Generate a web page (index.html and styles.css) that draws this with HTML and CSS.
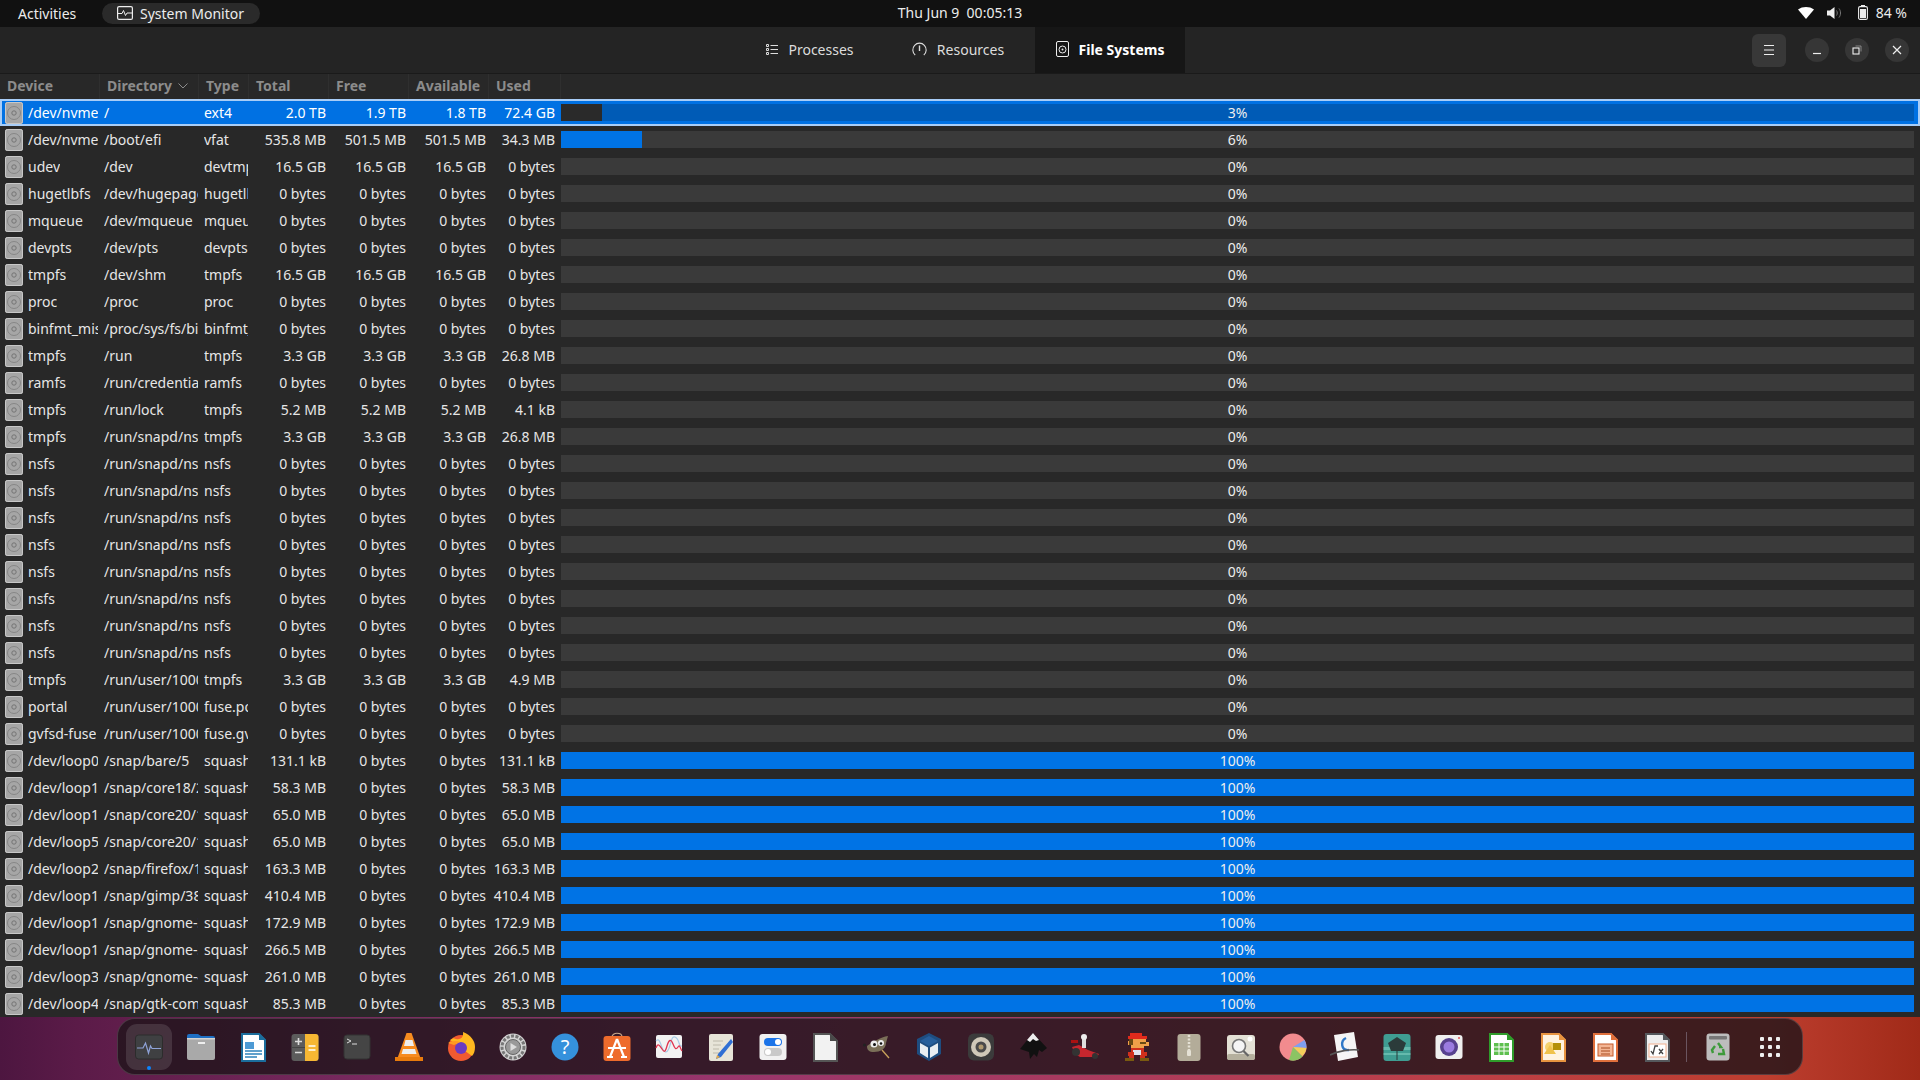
FILE: index.html
```html
<!DOCTYPE html>
<html lang="en">
  <head>
    <meta charset="UTF-8" />
    <title>System Monitor</title>
    <link rel="stylesheet" href="styles.css">
  </head>
  <body>
    <svg class="defs" width="0" height="0">
      <symbol id="disk" viewBox="0 0 18 22">
        <rect x="0" y="0" width="18" height="22" rx="2.5" fill="#a6a6a6"/>
        <rect x="0.5" y="0.5" width="17" height="21" rx="2" fill="none" stroke="#c8c8c8"/>
        <circle cx="9" cy="11" r="6.5" fill="none" stroke="#868686"/>
        <circle cx="9" cy="11" r="2.2" fill="none" stroke="#747474"/>
      </symbol>
    </svg>

    <!-- gnome top bar -->
    <header class="topbar">
      <div class="top-left">
        <span class="activities">Activities</span>
        <span class="app-pill">
          <svg width="16" height="14" viewBox="0 0 16 14"><rect x="0.6" y="0.6" width="14.8" height="12.8" rx="1.5" fill="none" stroke="#eee" stroke-width="1.2"/><path d="M1 7.5h4l1.5-3 2 5 1.5-2.5H15" fill="none" stroke="#eee"/></svg>
          System Monitor
        </span>
      </div>
      <span class="clock">Thu Jun 9&nbsp; 00:05:13</span>
      <span class="tray">
        <svg width="16" height="12" viewBox="0 0 16 12"><path d="M0 2.5C4.5-.8 11.5-.8 16 2.5L8 12z" fill="#fff"/></svg>
        <svg class="tray-vol" width="15" height="14" viewBox="0 0 15 14"><path d="M0 4.5h3L7.5 1v12L3 9.5H0z" fill="#eee"/><path d="M9.5 4.5c1 1.500 1 3.500 0 5M12 2.5c2 2.500 2 6.500 0 9" fill="none" stroke="#777"/></svg>
        <svg class="tray-bat" width="10" height="15" viewBox="0 0 10 15"><rect x="0.6" y="1.6" width="8.8" height="12.8" rx="1.5" fill="none" stroke="#eee" stroke-width="1.1"/><rect x="3" y="0" width="4" height="2" fill="#eee"/><rect x="2" y="4" width="6" height="9" fill="#eee"/></svg>
        <span>84 %</span>
      </span>
    </header>

    <div class="window">
      <div class="headerbar">
        <nav class="tabs">
          <div class="tab">
            <svg width="12" height="11" viewBox="0 0 12 11"><path d="M4.5 1.5H12M4.5 5.5H12M4.5 9.5H12" stroke="#ddd" fill="none"/><path d="M.5.5h2v2h-2zM.5 4.5h2v2h-2zM.5 8.5h2v2h-2z" stroke="#ddd" fill="none"/></svg>
            Processes
          </div>
          <div class="tab tab-res">
            <svg width="15" height="14" viewBox="0 0 15 14"><path d="M3.2 13A6.7 6.7 0 1 1 11.8 13" fill="none" stroke="#ddd" stroke-width="1.1"/><path d="M7.5 3.5v5.500" stroke="#ddd" stroke-width="1.4"/></svg>
            Resources
          </div>
          <div class="tab tab-active">
            <svg width="13" height="16" viewBox="0 0 13 16"><rect x="0.5" y="0.5" width="12" height="15" rx="1.5" fill="none" stroke="#eee"/><circle cx="6.5" cy="8.5" r="3.5" fill="none" stroke="#eee"/><circle cx="6.5" cy="8.5" r="1" fill="#eee"/></svg>
            File Systems
          </div>
        </nav>
        <div class="wm-buttons">
          <button class="menu-btn"><svg width="12" height="10" viewBox="0 0 12 10"><path d="M1 .5h10M1 5h10M1 9.5h10" stroke="#eee"/></svg></button>
          <button class="wm-btn"><svg width="10" height="10" viewBox="0 0 10 10"><path d="M1 8.5h8" stroke="#eee" stroke-width="1.2"/></svg></button>
          <button class="wm-btn"><svg width="10" height="10" viewBox="0 0 10 10"><rect x="1" y="3" width="6" height="6" fill="none" stroke="#eee" stroke-width="1.1"/><path d="M3.5 1H9v5.5" fill="none" stroke="#999" stroke-width=".8"/></svg></button>
          <button class="wm-btn"><svg width="10" height="10" viewBox="0 0 10 10"><path d="M1 1l8 8M9 1l-8 8" stroke="#eee" stroke-width="1.2"/></svg></button>
        </div>
      </div>

      <div class="row-grid col-head">
        <span>Device</span>
        <span>Directory <svg width="10" height="6" viewBox="0 0 10 6"><path d="M.5.5L5 5l4.5-4.5" fill="none" stroke="#8c8c8c"/></svg></span>
        <span>Type</span>
        <span>Total</span>
        <span>Free</span>
        <span>Available</span>
        <span>Used</span>
        <span></span>
      </div>

      <div class="rows">
        <div class="row-grid row selected"><span class="device"><svg class="disk"><use href="#disk"/></svg><span>/dev/nvme0n1p2</span></span><span class="dir">/</span><span class="type">ext4</span><span class="num">2.0 TB</span><span class="num">1.9 TB</span><span class="num">1.8 TB</span><span class="num used">72.4 GB</span><span class="bar"><i style="width:3%"></i><b>3%</b></span></div>
        <div class="row-grid row"><span class="device"><svg class="disk"><use href="#disk"/></svg><span>/dev/nvme0n1p1</span></span><span class="dir">/boot/efi</span><span class="type">vfat</span><span class="num">535.8 MB</span><span class="num">501.5 MB</span><span class="num">501.5 MB</span><span class="num used">34.3 MB</span><span class="bar"><i style="width:6%"></i><b>6%</b></span></div>
        <div class="row-grid row"><span class="device"><svg class="disk"><use href="#disk"/></svg><span>udev</span></span><span class="dir">/dev</span><span class="type">devtmpfs</span><span class="num">16.5 GB</span><span class="num">16.5 GB</span><span class="num">16.5 GB</span><span class="num used">0 bytes</span><span class="bar"><b>0%</b></span></div>
        <div class="row-grid row"><span class="device"><svg class="disk"><use href="#disk"/></svg><span>hugetlbfs</span></span><span class="dir">/dev/hugepages</span><span class="type">hugetlbfs</span><span class="num">0 bytes</span><span class="num">0 bytes</span><span class="num">0 bytes</span><span class="num used">0 bytes</span><span class="bar"><b>0%</b></span></div>
        <div class="row-grid row"><span class="device"><svg class="disk"><use href="#disk"/></svg><span>mqueue</span></span><span class="dir">/dev/mqueue</span><span class="type">mqueue</span><span class="num">0 bytes</span><span class="num">0 bytes</span><span class="num">0 bytes</span><span class="num used">0 bytes</span><span class="bar"><b>0%</b></span></div>
        <div class="row-grid row"><span class="device"><svg class="disk"><use href="#disk"/></svg><span>devpts</span></span><span class="dir">/dev/pts</span><span class="type">devpts</span><span class="num">0 bytes</span><span class="num">0 bytes</span><span class="num">0 bytes</span><span class="num used">0 bytes</span><span class="bar"><b>0%</b></span></div>
        <div class="row-grid row"><span class="device"><svg class="disk"><use href="#disk"/></svg><span>tmpfs</span></span><span class="dir">/dev/shm</span><span class="type">tmpfs</span><span class="num">16.5 GB</span><span class="num">16.5 GB</span><span class="num">16.5 GB</span><span class="num used">0 bytes</span><span class="bar"><b>0%</b></span></div>
        <div class="row-grid row"><span class="device"><svg class="disk"><use href="#disk"/></svg><span>proc</span></span><span class="dir">/proc</span><span class="type">proc</span><span class="num">0 bytes</span><span class="num">0 bytes</span><span class="num">0 bytes</span><span class="num used">0 bytes</span><span class="bar"><b>0%</b></span></div>
        <div class="row-grid row"><span class="device"><svg class="disk"><use href="#disk"/></svg><span>binfmt_misc</span></span><span class="dir">/proc/sys/fs/binfmt_misc</span><span class="type">binfmt_misc</span><span class="num">0 bytes</span><span class="num">0 bytes</span><span class="num">0 bytes</span><span class="num used">0 bytes</span><span class="bar"><b>0%</b></span></div>
        <div class="row-grid row"><span class="device"><svg class="disk"><use href="#disk"/></svg><span>tmpfs</span></span><span class="dir">/run</span><span class="type">tmpfs</span><span class="num">3.3 GB</span><span class="num">3.3 GB</span><span class="num">3.3 GB</span><span class="num used">26.8 MB</span><span class="bar"><b>0%</b></span></div>
        <div class="row-grid row"><span class="device"><svg class="disk"><use href="#disk"/></svg><span>ramfs</span></span><span class="dir">/run/credentials</span><span class="type">ramfs</span><span class="num">0 bytes</span><span class="num">0 bytes</span><span class="num">0 bytes</span><span class="num used">0 bytes</span><span class="bar"><b>0%</b></span></div>
        <div class="row-grid row"><span class="device"><svg class="disk"><use href="#disk"/></svg><span>tmpfs</span></span><span class="dir">/run/lock</span><span class="type">tmpfs</span><span class="num">5.2 MB</span><span class="num">5.2 MB</span><span class="num">5.2 MB</span><span class="num used">4.1 kB</span><span class="bar"><b>0%</b></span></div>
        <div class="row-grid row"><span class="device"><svg class="disk"><use href="#disk"/></svg><span>tmpfs</span></span><span class="dir">/run/snapd/ns</span><span class="type">tmpfs</span><span class="num">3.3 GB</span><span class="num">3.3 GB</span><span class="num">3.3 GB</span><span class="num used">26.8 MB</span><span class="bar"><b>0%</b></span></div>
        <div class="row-grid row"><span class="device"><svg class="disk"><use href="#disk"/></svg><span>nsfs</span></span><span class="dir">/run/snapd/ns/a</span><span class="type">nsfs</span><span class="num">0 bytes</span><span class="num">0 bytes</span><span class="num">0 bytes</span><span class="num used">0 bytes</span><span class="bar"><b>0%</b></span></div>
        <div class="row-grid row"><span class="device"><svg class="disk"><use href="#disk"/></svg><span>nsfs</span></span><span class="dir">/run/snapd/ns/b</span><span class="type">nsfs</span><span class="num">0 bytes</span><span class="num">0 bytes</span><span class="num">0 bytes</span><span class="num used">0 bytes</span><span class="bar"><b>0%</b></span></div>
        <div class="row-grid row"><span class="device"><svg class="disk"><use href="#disk"/></svg><span>nsfs</span></span><span class="dir">/run/snapd/ns/c</span><span class="type">nsfs</span><span class="num">0 bytes</span><span class="num">0 bytes</span><span class="num">0 bytes</span><span class="num used">0 bytes</span><span class="bar"><b>0%</b></span></div>
        <div class="row-grid row"><span class="device"><svg class="disk"><use href="#disk"/></svg><span>nsfs</span></span><span class="dir">/run/snapd/ns/d</span><span class="type">nsfs</span><span class="num">0 bytes</span><span class="num">0 bytes</span><span class="num">0 bytes</span><span class="num used">0 bytes</span><span class="bar"><b>0%</b></span></div>
        <div class="row-grid row"><span class="device"><svg class="disk"><use href="#disk"/></svg><span>nsfs</span></span><span class="dir">/run/snapd/ns/e</span><span class="type">nsfs</span><span class="num">0 bytes</span><span class="num">0 bytes</span><span class="num">0 bytes</span><span class="num used">0 bytes</span><span class="bar"><b>0%</b></span></div>
        <div class="row-grid row"><span class="device"><svg class="disk"><use href="#disk"/></svg><span>nsfs</span></span><span class="dir">/run/snapd/ns/f</span><span class="type">nsfs</span><span class="num">0 bytes</span><span class="num">0 bytes</span><span class="num">0 bytes</span><span class="num used">0 bytes</span><span class="bar"><b>0%</b></span></div>
        <div class="row-grid row"><span class="device"><svg class="disk"><use href="#disk"/></svg><span>nsfs</span></span><span class="dir">/run/snapd/ns/g</span><span class="type">nsfs</span><span class="num">0 bytes</span><span class="num">0 bytes</span><span class="num">0 bytes</span><span class="num used">0 bytes</span><span class="bar"><b>0%</b></span></div>
        <div class="row-grid row"><span class="device"><svg class="disk"><use href="#disk"/></svg><span>nsfs</span></span><span class="dir">/run/snapd/ns/h</span><span class="type">nsfs</span><span class="num">0 bytes</span><span class="num">0 bytes</span><span class="num">0 bytes</span><span class="num used">0 bytes</span><span class="bar"><b>0%</b></span></div>
        <div class="row-grid row"><span class="device"><svg class="disk"><use href="#disk"/></svg><span>tmpfs</span></span><span class="dir">/run/user/1000</span><span class="type">tmpfs</span><span class="num">3.3 GB</span><span class="num">3.3 GB</span><span class="num">3.3 GB</span><span class="num used">4.9 MB</span><span class="bar"><b>0%</b></span></div>
        <div class="row-grid row"><span class="device"><svg class="disk"><use href="#disk"/></svg><span>portal</span></span><span class="dir">/run/user/1000/doc</span><span class="type">fuse.portal</span><span class="num">0 bytes</span><span class="num">0 bytes</span><span class="num">0 bytes</span><span class="num used">0 bytes</span><span class="bar"><b>0%</b></span></div>
        <div class="row-grid row"><span class="device"><svg class="disk"><use href="#disk"/></svg><span>gvfsd-fuse</span></span><span class="dir">/run/user/1000/gvfs</span><span class="type">fuse.gvfsd-fuse</span><span class="num">0 bytes</span><span class="num">0 bytes</span><span class="num">0 bytes</span><span class="num used">0 bytes</span><span class="bar"><b>0%</b></span></div>
        <div class="row-grid row"><span class="device"><svg class="disk"><use href="#disk"/></svg><span>/dev/loop0</span></span><span class="dir">/snap/bare/5</span><span class="type">squashfs</span><span class="num">131.1 kB</span><span class="num">0 bytes</span><span class="num">0 bytes</span><span class="num used">131.1 kB</span><span class="bar"><i style="width:100%"></i><b>100%</b></span></div>
        <div class="row-grid row"><span class="device"><svg class="disk"><use href="#disk"/></svg><span>/dev/loop11</span></span><span class="dir">/snap/core18/2409</span><span class="type">squashfs</span><span class="num">58.3 MB</span><span class="num">0 bytes</span><span class="num">0 bytes</span><span class="num used">58.3 MB</span><span class="bar"><i style="width:100%"></i><b>100%</b></span></div>
        <div class="row-grid row"><span class="device"><svg class="disk"><use href="#disk"/></svg><span>/dev/loop14</span></span><span class="dir">/snap/core20/1405</span><span class="type">squashfs</span><span class="num">65.0 MB</span><span class="num">0 bytes</span><span class="num">0 bytes</span><span class="num used">65.0 MB</span><span class="bar"><i style="width:100%"></i><b>100%</b></span></div>
        <div class="row-grid row"><span class="device"><svg class="disk"><use href="#disk"/></svg><span>/dev/loop5</span></span><span class="dir">/snap/core20/1518</span><span class="type">squashfs</span><span class="num">65.0 MB</span><span class="num">0 bytes</span><span class="num">0 bytes</span><span class="num used">65.0 MB</span><span class="bar"><i style="width:100%"></i><b>100%</b></span></div>
        <div class="row-grid row"><span class="device"><svg class="disk"><use href="#disk"/></svg><span>/dev/loop2</span></span><span class="dir">/snap/firefox/1443</span><span class="type">squashfs</span><span class="num">163.3 MB</span><span class="num">0 bytes</span><span class="num">0 bytes</span><span class="num used">163.3 MB</span><span class="bar"><i style="width:100%"></i><b>100%</b></span></div>
        <div class="row-grid row"><span class="device"><svg class="disk"><use href="#disk"/></svg><span>/dev/loop17</span></span><span class="dir">/snap/gimp/380</span><span class="type">squashfs</span><span class="num">410.4 MB</span><span class="num">0 bytes</span><span class="num">0 bytes</span><span class="num used">410.4 MB</span><span class="bar"><i style="width:100%"></i><b>100%</b></span></div>
        <div class="row-grid row"><span class="device"><svg class="disk"><use href="#disk"/></svg><span>/dev/loop16</span></span><span class="dir">/snap/gnome-3-34</span><span class="type">squashfs</span><span class="num">172.9 MB</span><span class="num">0 bytes</span><span class="num">0 bytes</span><span class="num used">172.9 MB</span><span class="bar"><i style="width:100%"></i><b>100%</b></span></div>
        <div class="row-grid row"><span class="device"><svg class="disk"><use href="#disk"/></svg><span>/dev/loop15</span></span><span class="dir">/snap/gnome-3-38</span><span class="type">squashfs</span><span class="num">266.5 MB</span><span class="num">0 bytes</span><span class="num">0 bytes</span><span class="num used">266.5 MB</span><span class="bar"><i style="width:100%"></i><b>100%</b></span></div>
        <div class="row-grid row"><span class="device"><svg class="disk"><use href="#disk"/></svg><span>/dev/loop3</span></span><span class="dir">/snap/gnome-42</span><span class="type">squashfs</span><span class="num">261.0 MB</span><span class="num">0 bytes</span><span class="num">0 bytes</span><span class="num used">261.0 MB</span><span class="bar"><i style="width:100%"></i><b>100%</b></span></div>
        <div class="row-grid row"><span class="device"><svg class="disk"><use href="#disk"/></svg><span>/dev/loop4</span></span><span class="dir">/snap/gtk-common</span><span class="type">squashfs</span><span class="num">85.3 MB</span><span class="num">0 bytes</span><span class="num">0 bytes</span><span class="num used">85.3 MB</span><span class="bar"><i style="width:100%"></i><b>100%</b></span></div>
      </div>
    </div>

    <!-- dock -->
    <footer class="desktop">
      <div class="dock">
        <div class="dock-item running"><svg viewBox="0 0 30 30"><rect x="1.5" y="3" width="27" height="24" rx="3" fill="#3f4042" stroke="#2c2c2c"/><path d="M3 16h6l2.5-5 3 10 2-7 1.5 2.5h9" fill="none" stroke="#8fa3d8" stroke-width="1.2"/></svg></div>
        <div class="dock-item"><svg viewBox="0 0 30 30"><path d="M1 4a2 2 0 0 1 2-2h9l3 2h12a2 2 0 0 1 2 2v5H1z" fill="#1e6fc4"/><rect x="1" y="6" width="28" height="22" rx="2" fill="#a9a9a9"/><rect x="1" y="6" width="28" height="1.5" fill="#d4d4d4"/><rect x="12" y="10" width="7" height="2" fill="#eee"/></svg></div>
        <div class="dock-item"><svg viewBox="0 0 30 30"><path d="M4 2h17l6 6v21H4z" fill="#fff" stroke="#1b6d9c" stroke-width="2"/><path d="M21 1l7 7h-7z" fill="#1b6d9c"/><rect x="7" y="10" width="9" height="7" fill="#4d9ad4"/><path d="M7 19h17M7 22h17M7 25h12" stroke="#2e82bc" stroke-width="1.5"/></svg></div>
        <div class="dock-item"><svg viewBox="0 0 30 30"><rect x="1.5" y="2" width="27" height="27" rx="3" fill="#5c5c5c"/><path d="M15 2h10.5a3 3 0 0 1 3 3v21a3 3 0 0 1-3 3H15z" fill="#f7b733"/><path d="M1.5 15.5H15" stroke="#444"/><path d="M5 9.5h7M8.5 6v7M5 20.5h7" stroke="#ddd" stroke-width="1.6"/><path d="M18.5 14h7M18.5 18h7" stroke="#fff" stroke-width="1.5"/></svg></div>
        <div class="dock-item"><svg viewBox="0 0 30 30"><rect x="2" y="3" width="26" height="24" rx="3" fill="#454545" stroke="#333"/><path d="M5 7l4 2-4 2" fill="none" stroke="#ddd"/><path d="M10 12h5" stroke="#ddd"/></svg></div>
        <div class="dock-item"><svg viewBox="0 0 30 30"><path d="M12.5 1h5l9 25h-23z" fill="#f68b1f"/><path d="M11.5 8h7l1.5 6H10zM9 17h12l1.500 5h-15z" fill="#eee"/><path d="M1 25h28v4H1z" fill="#e87b0c"/></svg></div>
        <div class="dock-item"><svg viewBox="0 0 30 30"><circle cx="15" cy="16" r="13" fill="#f05a30"/><path d="M4 8c6-4 3 0 9-1 5-1 4-6 4-7 8 3 12 9 12 15 0 4-1 7-3 9z" fill="#ffb820"/><circle cx="15" cy="16" r="6" fill="#6b3ac2"/><path d="M2 11c3-2 8-3 12-1l-6 3z" fill="#ff9a20"/></svg></div>
        <div class="dock-item"><svg viewBox="0 0 30 30"><circle cx="15" cy="15" r="13.5" fill="#d4d4d4"/><circle cx="15" cy="15" r="11" fill="none" stroke="#777" stroke-width="3" stroke-dasharray="3 1.5"/><circle cx="15" cy="15" r="7.5" fill="#999" stroke="#666"/><path d="M12.5 11l6.5 4-6.5 4z" fill="#ddd"/></svg></div>
        <div class="dock-item"><svg viewBox="0 0 30 30"><circle cx="15" cy="15" r="13.5" fill="#3591dc"/><text x="15" y="22" text-anchor="middle" class="help-q">?</text></svg></div>
        <div class="dock-item"><svg viewBox="0 0 30 30"><path d="M10 5c0-5 10-5 10 0" fill="none" stroke="#c9a98b" stroke-width="1.2"/><rect x="1.5" y="4" width="27" height="25" rx="3" fill="#ee6b2c"/><path d="M15 7l-7 18M15 7l7 18M6 16h18M5 25h6M19 25h6" stroke="#fff" stroke-width="2.2" fill="none"/></svg></div>
        <div class="dock-item"><svg viewBox="0 0 30 30"><rect x="2" y="3" width="26" height="23" rx="2" fill="#f2f2f2"/><path d="M2 9c5-6 5 12 10 11s4-17 9-15 3 10 7 9" fill="none" stroke="#a8cce6" stroke-width="1.2"/><path d="M2 16c2-6 4-2 6 1s3 4 5-3 4-7 6-2 3 6 5 3 2 1 4 4" fill="none" stroke="#e0354f" stroke-width="1.3"/></svg></div>
        <div class="dock-item"><svg viewBox="0 0 30 30"><rect x="3" y="2" width="24" height="27" rx="2" fill="#e7e4d8"/><path d="M7 9h10M7 13h8M7 17h6M7 21h10" stroke="#bcb8aa"/><path d="M25 7l-13 15-2 5 5-2 12-15z" fill="#2f6fd4"/><path d="M10 27l1-4 3 2z" fill="#e0a84c"/></svg></div>
        <div class="dock-item"><svg viewBox="0 0 30 30"><rect x="1.5" y="2" width="27" height="26" rx="3" fill="#f1f1f1"/><rect x="6" y="6" width="18" height="8" rx="4" fill="#1a73e8"/><circle cx="20" cy="10" r="3" fill="#fff"/><rect x="6" y="16" width="18" height="8" rx="4" fill="#c9c9c9"/><circle cx="10" cy="20" r="3" fill="#fff"/></svg></div>
        <div class="dock-item"><svg viewBox="0 0 30 30"><path d="M4 2h16l7 7v20H4z" fill="#f2f2f2" stroke="#555" stroke-width="2"/><path d="M20 1l8 8h-8z" fill="#4a4a4a"/></svg></div>
        <div class="dock-item"><svg viewBox="0 0 30 30"><path d="M5 14c4-3 14-9 21-10l-2 7c0 6-6 9-12 9-5 0-7-2-7-6z" fill="#7a6f58"/><circle cx="12" cy="12" r="3.5" fill="#eee"/><circle cx="19" cy="11" r="3" fill="#eee"/><circle cx="12.5" cy="12.5" r="1.5" fill="#111"/><circle cx="19" cy="11.5" r="1.3" fill="#111"/><circle cx="2.5" cy="13" r="1.5" fill="#222"/><path d="M20 18l7 8" stroke="#c8a15a" stroke-width="1.3"/></svg></div>
        <div class="dock-item"><svg viewBox="0 0 30 30"><path d="M15 1L27 7v15l-12 7-12-7V7z" fill="#1e4d80"/><path d="M15 4l9 5-9 5-9-5z" fill="#275f9c"/><path d="M6 11l8 4.5V26l-8-5zM24 11l-8 4.5V26l8-5z" fill="#e8edf2"/></svg></div>
        <div class="dock-item"><svg viewBox="0 0 30 30"><rect x="2" y="1.5" width="26" height="27" rx="6" fill="#3b3b3b"/><circle cx="15" cy="15" r="10" fill="#cfc8b8"/><circle cx="15" cy="15" r="5.5" fill="#4a4a4a"/><circle cx="15" cy="15" r="2.5" fill="#b09a70"/></svg></div>
        <div class="dock-item"><svg viewBox="0 0 30 30"><path d="M15 1L29 16l-5 4-3-2-2 7-3-3-4 5-1-7-9-3z" fill="#111"/><path d="M15 1l6 7-3 1-3-2-3 3-3-2z" fill="#eee"/></svg></div>
        <div class="dock-item"><svg viewBox="0 0 30 30"><path d="M2 15l7-2 9 5 11 4-2 3H10l-5-3z" fill="#c6262e"/><circle cx="6" cy="20" r="4" fill="#333"/><circle cx="25" cy="24" r="3" fill="#333"/><rect x="1" y="8" width="7" height="3" fill="#a11"/><path d="M12 7h4v9h-4z" fill="#ddd"/><circle cx="14" cy="5" r="3" fill="#eee"/></svg></div>
        <div class="dock-item"><svg viewBox="0 0 30 30"><path d="M8 1h12v3h5v3H6V4h2z" fill="#e02a1c"/><path d="M7 7h17v3h3v4h-5v2H9v-3H6V9h1z" fill="#f0a049"/><path d="M7 7h4v6H7zM18 10h6v2h-6z" fill="#6b4a12"/><path d="M9 16h13v4H9z" fill="#d0301c"/><path d="M11 18h8v5h-8z" fill="#dfe3ee"/><path d="M6 20h6v4H6zM19 20h6v4h-6z" fill="#d0301c"/><path d="M3 26h9v3H3zM18 26h9v3h-9z" fill="#7a5a10"/><path d="M7 23h5v3H7zM18 23h5v3h-5z" fill="#d0301c"/></svg></div>
        <div class="dock-item"><svg viewBox="0 0 30 30"><rect x="3.5" y="2" width="23" height="27" rx="3" fill="#b3ac99"/><path d="M15 3v15" stroke="#e5e1d5" stroke-width="2.5" stroke-dasharray="2 1.5"/><rect x="13" y="18" width="4" height="6" rx="1" fill="#e5e1d5"/></svg></div>
        <div class="dock-item"><svg viewBox="0 0 30 30"><rect x="1" y="3" width="28" height="25" rx="3" fill="#e4e1d6"/><rect x="1" y="22" width="28" height="6" rx="2" fill="#b5b09e"/><circle cx="13" cy="14" r="6.5" fill="#f5f5f5" stroke="#777" stroke-width="1.6"/><path d="M17.5 19l5 5" stroke="#666" stroke-width="2.2"/><circle cx="24" cy="7" r="2.5" fill="#fff"/></svg></div>
        <div class="dock-item"><svg viewBox="0 0 30 30"><circle cx="15" cy="15" r="13.5" fill="#f28b8e"/><path d="M15 15l11.5-7a13.5 13.5 0 0 1 2 8z" fill="#7e9ff0"/><path d="M15 15l13.5 1a13.5 13.5 0 0 1-4 8z" fill="#f3cf5a"/><path d="M15 15l9.5 9.6A13.5 13.5 0 0 1 11 28z" fill="#8cc463"/></svg></div>
        <div class="dock-item"><svg viewBox="0 0 30 30"><path d="M4 3l20-3 4 25-20 4z" fill="#f5f5f5"/><path d="M16 6c-6 3-5 13 3 12" fill="none" stroke="#2f78c8" stroke-width="2.4"/><path d="M0 23c8-4 20-6 29-5" fill="none" stroke="#555" stroke-width="1.6"/></svg></div>
        <div class="dock-item"><svg viewBox="0 0 30 30"><rect x="1.5" y="2" width="27" height="27" rx="3" fill="#3f9d92"/><path d="M1.5 15h27v3h-27zM1.5 21h27v2h-27z" fill="#7fcdbf" opacity=".6"/><path d="M15 5l9 6-3 8H9l-3-8z" fill="#2b3b3a"/><path d="M14.5 19h1v9h-1z" fill="#2b3b3a"/></svg></div>
        <div class="dock-item"><svg viewBox="0 0 30 30"><rect x="1.5" y="3" width="27" height="24" rx="3" fill="#efefef"/><circle cx="15" cy="15" r="9" fill="#57418e"/><circle cx="15" cy="15" r="5.5" fill="#9a7be0"/><circle cx="25" cy="6" r="1" fill="#e0555a"/></svg></div>
        <div class="dock-item"><svg viewBox="0 0 30 30"><path d="M4 2h17l6 6v21H4z" fill="#fff" stroke="#2f9c2a" stroke-width="2"/><path d="M21 1l7 7h-7z" fill="#2f9c2a"/><path d="M8 11h15v12H8z" fill="#5ec04f"/><path d="M8 15h15M8 19h15M13 11v12M18 11v12" stroke="#fff"/></svg></div>
        <div class="dock-item"><svg viewBox="0 0 30 30"><path d="M4 2h17l6 6v21H4z" fill="#fff3e0" stroke="#e89440" stroke-width="2"/><path d="M21 1l7 7h-7z" fill="#e89440"/><circle cx="12" cy="15" r="5" fill="#f5d26d"/><path d="M12 13l6 9H6z" fill="#f0c24c"/><rect x="15" y="11" width="8" height="7" fill="#b49008"/></svg></div>
        <div class="dock-item"><svg viewBox="0 0 30 30"><path d="M4 2h17l6 6v21H4z" fill="#fff" stroke="#e0703c" stroke-width="2"/><path d="M21 1l7 7h-7z" fill="#e0703c"/><rect x="8" y="12" width="15" height="12" fill="#f3b594" stroke="#c45a2a"/><path d="M11 16h9M11 19h9M11 22h9" stroke="#a84c20"/></svg></div>
        <div class="dock-item"><svg viewBox="0 0 30 30"><path d="M4 2h17l6 6v21H4z" fill="#eee" stroke="#55585c" stroke-width="2"/><path d="M21 1l7 7h-7z" fill="#55585c"/><rect x="7" y="12" width="17" height="13" fill="#fff" stroke="#f0b090"/><path d="M9 19l2 3 2-8h3M17 17l4 5M21 17l-4 5" fill="none" stroke="#444" stroke-width="1.3"/></svg></div>
        <span class="dock-sep"></span>
        <div class="dock-item"><svg viewBox="0 0 30 30"><rect x="3.5" y="1.5" width="23" height="27" rx="3" fill="#bdbdbd"/><rect x="6" y="4" width="18" height="3.5" rx="1" fill="#777"/><path d="M15 11l3 4h-2M10 21l-1-3 3-4M20 17l1 5h-6" fill="none" stroke="#3d9a3a" stroke-width="2.4"/></svg></div>
        <div class="dock-item"><svg viewBox="0 0 30 30"><g fill="#eee"><rect x="5" y="5" width="4" height="4" rx="1"/><rect x="13" y="5" width="4" height="4" rx="1"/><rect x="21" y="5" width="4" height="4" rx="1"/><rect x="5" y="13" width="4" height="4" rx="1"/><rect x="13" y="13" width="4" height="4" rx="1"/><rect x="21" y="13" width="4" height="4" rx="1"/><rect x="5" y="21" width="4" height="4" rx="1"/><rect x="13" y="21" width="4" height="4" rx="1"/><rect x="21" y="21" width="4" height="4" rx="1"/></g></svg></div>
      </div>
    </footer>
  </body>
</html>
```

FILE: styles.css
```css
* {
  box-sizing: border-box;
}
body {
  margin: 0;
  display: flex;
  flex-direction: column;
  height: 1080px;
  overflow: hidden;
  background-color: #282828;
  color: #e6e6e6;
  font-family: 'Noto Sans', sans-serif;
  font-size: 14px;
}
.defs {
  position: absolute;
}

/* top bar */
.topbar {
  display: grid;
  grid-template-columns: 1fr auto 1fr;
  align-items: center;
  height: 27px;
  background-color: #111;
  color: #ececec;
}
.top-left {
  display: flex;
  align-items: center;
  padding-left: 18px;
}
.activities {
  width: 84px;
  padding-bottom: 1px;
}
.app-pill {
  display: flex;
  align-items: center;
  gap: 7px;
  width: 158px;
  height: 21px;
  padding-left: 15px;
  padding-bottom: 1px;
  border-radius: 11px;
  background-color: #2a2a2a;
  white-space: nowrap;
}
.clock {
  padding-bottom: 2px;
  white-space: nowrap;
}
.tray {
  display: flex;
  align-items: center;
  justify-content: flex-end;
  padding-right: 13px;
  padding-bottom: 2px;
}
.tray-vol {
  margin-left: 13px;
}
.tray-bat {
  margin-left: 16px;
  margin-right: 8px;
}

/* window */
.window {
  height: 990px;
  display: flex;
  flex-direction: column;
  overflow: hidden;
}
.headerbar {
  display: flex;
  align-items: center;
  height: 47px;
  flex-shrink: 0;
  background-color: #242424;
  border-bottom: 1px solid #1a1a1a;
}
.tabs {
  display: flex;
  margin-left: 735px;
  height: 46px;
}
.tab {
  display: flex;
  align-items: center;
  justify-content: center;
  gap: 10px;
  width: 150px;
  padding-bottom: 2px;
  color: #dcdcdc;
}
.tab-res {
  padding-right: 4px;
}
.tab-active {
  background-color: #161616;
  color: #fff;
  font-weight: 700;
}
.wm-buttons {
  display: flex;
  align-items: center;
  margin-left: auto;
  padding-right: 11px;
}
button {
  display: flex;
  align-items: center;
  justify-content: center;
  border: none;
  padding: 0;
  background-color: #363636;
}
.menu-btn {
  width: 34px;
  height: 33px;
  border-radius: 6px;
  margin-right: 19px;
  background-color: #383838;
}
.wm-btn {
  width: 24px;
  height: 24px;
  border-radius: 50%;
  margin-left: 16px;
}
.menu-btn + .wm-btn {
  margin-left: 0;
}

/* table */
.row-grid {
  display: grid;
  grid-template-columns: 100px 99px 50px 80px 80px 80px 72px 1fr;
}
.col-head {
  height: 25px;
  flex-shrink: 0;
  color: #8c8c8c;
  font-weight: 700;
}
.col-head span {
  line-height: 23px;
  padding-left: 7px;
  border-right: 1px solid #2f2f2f;
  white-space: nowrap;
}
.col-head span:last-child {
  border-right: none;
}
.col-head svg {
  margin-left: 2px;
  vertical-align: 2px;
}
.row {
  height: 27px;
  align-items: center;
  white-space: nowrap;
}
.device {
  display: flex;
  align-items: center;
  gap: 5px;
  margin: 0 2px 0 5px;
  overflow: hidden;
}
.device span {
  overflow: hidden;
}
.disk {
  width: 18px;
  height: 22px;
  flex-shrink: 0;
}
.dir {
  margin: 0 1px 0 4px;
  overflow: hidden;
}
.type {
  margin: 0 1px 0 5px;
  overflow: hidden;
}
.num {
  text-align: right;
  padding-right: 3px;
}
.num.used {
  padding-right: 6px;
}
.bar {
  position: relative;
  display: block;
  height: 17px;
  margin-right: 6px;
  background-color: #3a3a3a;
}
.bar i {
  display: block;
  height: 100%;
  background-color: #0073e5;
}
.bar b {
  position: absolute;
  inset: 0;
  text-align: center;
  font-weight: 400;
  line-height: 17px;
  color: #eee;
}
.selected {
  background-color: #0071e3;
  box-shadow: inset 0 0 0 2px #a8cdf7;
  color: #fff;
}
.selected .bar {
  background-color: #005bb6;
}
.selected .bar i {
  background-color: #2a2a2a;
}

/* desktop + dock */
.desktop {
  flex: 1;
  padding: 1px 117px 0;
  background: linear-gradient(90deg, #4d1640 0%, #5b1b48 4%, #641f4e 8%, #7a2a60 20%, #98356c 37%, #a83a60 55%, #bc3f48 75%, #bd3e2f 92%, #a02a18 100%);
}
.dock {
  display: flex;
  align-items: center;
  height: 57px;
  padding-left: 8px;
  gap: 6px;
  border-radius: 18px;
  border: 1px solid rgba(255, 255, 255, 0.15);
  background-color: rgba(30, 20, 25, 0.8);
}
.dock-item {
  position: relative;
  display: flex;
  align-items: center;
  justify-content: center;
  width: 46px;
  height: 46px;
  border-radius: 11px;
}
.dock-item svg {
  width: 30px;
  height: 30px;
}
.running {
  background-color: rgba(255, 255, 255, 0.12);
}
.running::after {
  content: '';
  position: absolute;
  bottom: 0;
  left: 21px;
  width: 4px;
  height: 4px;
  border-radius: 50%;
  background-color: #0a84ff;
}
.dock-sep {
  width: 1px;
  height: 30px;
  margin-right: 2px;
  background-color: #6b5560;
}
.help-q {
  fill: #fff;
  font-size: 20px;
  font-family: 'Noto Sans', sans-serif;
}
```
